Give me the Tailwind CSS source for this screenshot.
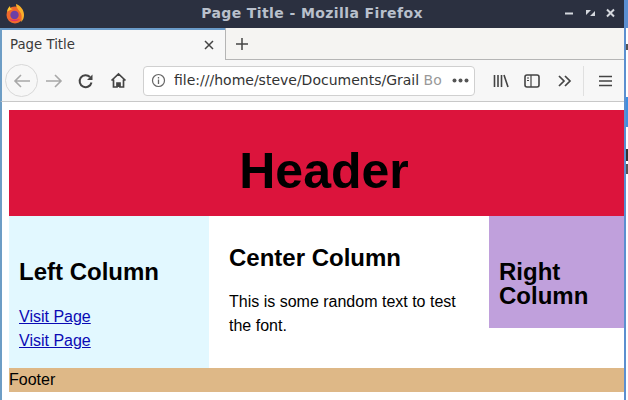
<!DOCTYPE html>
<html lang="en">
<head>
  <meta charset="UTF-8"/>
  <title>Page Title</title>
  <script src="https://cdn.jsdelivr.net/npm/@tailwindcss/browser@4"></script>
</head>
<body class="w-[628px] h-[400px] overflow-hidden bg-white flex font-['Liberation_Sans',sans-serif]">
  <div class="w-[624px] h-[400px] flex flex-col shrink-0 relative">
    <!-- Title bar -->
    <div class="h-[28px] shrink-0 bg-[#2b3040] flex items-center relative">
      <svg class="absolute left-[5px] top-[3px]" width="20" height="21" viewBox="0 0 20 21">
        <circle cx="10" cy="12" r="8.500" fill="#f0682c"/>
        <path d="M11 1c5 2 8 6 8 11 0 3-1 5-3 7 1-4 1-8-1-10-1-2-4-4-4-8z" fill="#fbb02a"/>
        <path d="M2 9c0-3 2-5 3-6 0 2 1 3 3 3-3 1-5 2-6 3z" fill="#fcc22f"/>
        <circle cx="9.500" cy="12" r="4.200" fill="#6d3fa5"/>
        <path d="M4 16c3 3 8 3 11 0-3 1-8 1-11 0z" fill="#e0306a"/>
      </svg>
      <div class="w-full text-center text-[14px] font-bold text-[#b9c0cc] tracking-[0.4px] -mt-[1px] font-['DejaVu_Sans',sans-serif]">Page Title - Mozilla Firefox</div>
      <svg class="absolute left-[562px] top-[7px]" width="56" height="12" viewBox="0 0 56 12" fill="none">
        <path d="M3 6.500h8" stroke="#d5d8de" stroke-width="2"/>
        <path d="M24 3h5l-5 5zM33 9h-5l5-5z" fill="#d5d8de"/>
        <path d="M45 2.500l7 7M52 2.500l-7 7" stroke="#d5d8de" stroke-width="2"/>
      </svg>
    </div>
    <!-- Tab strip -->
    <div class="h-[32px] shrink-0 bg-[#f5f4f2] flex border-l-2 border-[#6d9dc5]">
      <div class="w-[224px] h-[32px] border-t-2 border-[#6a9bc9] bg-[#f7f7f7] flex items-center justify-between pl-[8px] pr-[10px] text-[13.300px] text-[#3a3a3a] font-['DejaVu_Sans',sans-serif]">
        <span>Page Title</span>
        <svg width="12" height="12" viewBox="0 0 12 12" fill="none"><path d="M2 2l8 8M10 2l-8 8" stroke="#444" stroke-width="1.500"/></svg>
      </div>
      <div class="w-[400px] h-[32px] border-l border-b border-[#b5b5b5] pl-[8px] flex items-center">
        <svg width="16" height="16" viewBox="0 0 16 16" fill="none"><path d="M8 2v12M2 8h12" stroke="#444" stroke-width="1.500"/></svg>
      </div>
    </div>
    <!-- Nav bar -->
    <div class="h-[42px] shrink-0 bg-[#f7f7f7] border-l-2 border-[#6d9dc5] border-b border-b-[#c8c8c8] flex items-center text-[#444]">
      <div class="w-[33px] h-[33px] ml-[3px] rounded-full border border-[#d8d8d8] flex items-center justify-center">
        <svg width="18" height="16" viewBox="0 0 18 16" fill="none"><path d="M17 8H2M8 2L2 8l6 6" stroke="#a8a8a8" stroke-width="1.600"/></svg>
      </div>
      <svg class="ml-[7px]" width="18" height="16" viewBox="0 0 18 16" fill="none"><path d="M1 8h15M10 2l6 6-6 6" stroke="#a8a8a8" stroke-width="1.600"/></svg>
      <svg class="ml-[15px]" width="16" height="16" viewBox="0 0 16 16" fill="none"><path d="M13.500 9.500A6 6 0 1 1 12 4" stroke="#444" stroke-width="2"/><path d="M14.500 1.500v5.500H9z" fill="#444"/></svg>
      <svg class="ml-[16px]" width="17" height="17" viewBox="0 0 17 17" fill="none"><path d="M1.500 8.500L8.500 2l7 6.500M3.500 7.500V15h3.500v-4h3v4h3.500V7.500" stroke="#444" stroke-width="1.700"/><path d="M7 15v-4h3v4z" fill="#444"/></svg>
      <div class="ml-[16px] w-[332px] h-[30px] rounded-[4px] border border-[#d0d0d0] bg-white flex items-center pl-[7px] pr-[5px] font-['DejaVu_Sans',sans-serif] text-[14px] text-[#333]">
        <svg class="shrink-0" width="15" height="15" viewBox="0 0 15 15" fill="none"><circle cx="7.500" cy="7.500" r="6" stroke="#666" stroke-width="1.200"/><path d="M7.500 6.500v4.500M7.500 4v1.500" stroke="#666" stroke-width="1.300"/></svg>
        <span class="ml-[8px] whitespace-nowrap overflow-hidden w-[272px]">file:///home/steve/Documents/Grail <span class="text-[#999]">Bo</span></span>
        <svg class="ml-auto shrink-0" width="17" height="5" viewBox="0 0 17 5" fill="#555"><circle cx="2.500" cy="2.500" r="2"/><circle cx="8.500" cy="2.500" r="2"/><circle cx="14.500" cy="2.500" r="2"/></svg>
      </div>
      <svg class="ml-[18px]" width="16" height="16" viewBox="0 0 16 16" fill="none"><path d="M1.500 2v12M5 2v12M8.500 2v12M11 2l4 12" stroke="#444" stroke-width="1.600"/></svg>
      <svg class="ml-[15px]" width="16" height="14" viewBox="0 0 16 14" fill="none"><rect x="1" y="1" width="14" height="12" rx="2" stroke="#444" stroke-width="1.600"/><path d="M7 1v12M3 4h2M3 6.500h2" stroke="#444" stroke-width="1.200"/></svg>
      <svg class="ml-[18px]" width="14" height="12" viewBox="0 0 14 12" fill="none"><path d="M1 1l5 5-5 5M7 1l5 5-5 5" stroke="#444" stroke-width="1.700"/></svg>
      <div class="ml-[11px] w-px h-[30px] bg-[#e0e0e0]"></div>
      <svg class="ml-[15px]" width="13" height="12" viewBox="0 0 13 12" fill="none"><path d="M0 1.500h13M0 6h13M0 10.500h13" stroke="#444" stroke-width="1.500"/></svg>
    </div>
    <!-- Page content -->
    <div class="flex-1 border-l-2 border-[#6d9dc5] pl-[7px] pt-[8px] bg-white">
      <div class="w-[615px]">
        <div class="h-[106px] bg-[#dc143c] flex items-center justify-center pl-[15px] pt-[16px] text-[50px] font-bold text-black">Header</div>
        <div class="flex items-start h-[152px]">
          <div class="w-[200px] h-[152px] bg-[#e2f8ff] px-[10px] pt-[42px]">
            <h2 class="text-[24px] leading-[27px] font-bold text-black mb-[20px]">Left Column</h2>
            <a href="#" class="block text-[16px] leading-[24px] text-[#0a0ab4] underline">Visit Page</a>
            <a href="#" class="block text-[16px] leading-[24px] text-[#0a0ab4] underline">Visit Page</a>
          </div>
          <div class="w-[280px] px-[20px] pt-[28px]">
            <h2 class="text-[24px] leading-[27px] font-bold text-black mb-[19px]">Center Column</h2>
            <p class="text-[16px] leading-[24px] text-black">This is some random text to test the font.</p>
          </div>
          <div class="w-[135px] h-[112px] bg-[#c0a0dc] px-[10px] pt-[44px]">
            <h2 class="text-[24px] leading-[24px] font-bold text-black">Right Column</h2>
          </div>
        </div>
        <div class="h-[24px] bg-[#deb887] text-[16px] leading-[24px] text-black">Footer</div>
      </div>
    </div>
  </div>
  <!-- Sliver of the window behind -->
  <div class="w-[2px] h-[400px] shrink-0 bg-[#5b8fd0]"></div>
  <div class="w-[2px] h-[400px] shrink-0 flex flex-col bg-white">
    <div class="h-[28px] bg-[#5b8fd0]"></div>
    <div class="h-[16px]"></div>
    <div class="h-[6px] bg-[#555]"></div>
    <div class="h-[47px]"></div>
    <div class="h-[30px] bg-[#3f8fe0]"></div>
    <div class="h-[22px]"></div>
    <div class="h-[12px] bg-[#333]"></div>
    <div class="h-[3px]"></div>
    <div class="h-[10px] bg-[#555]"></div>
  </div>
</body>
</html>
